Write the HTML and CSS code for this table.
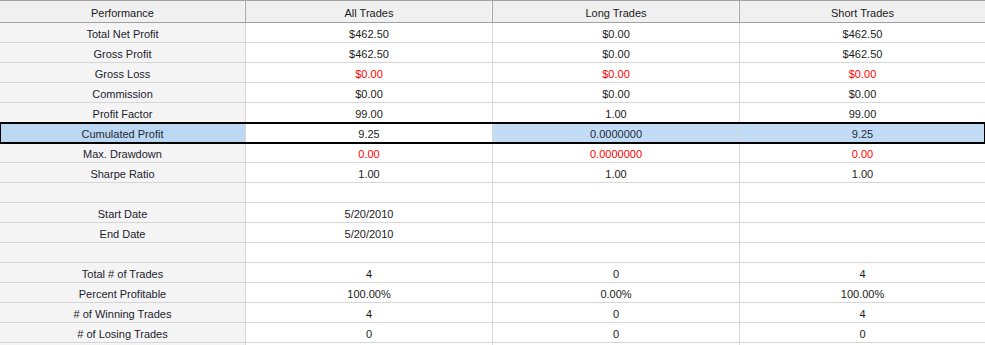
FILE: index.html
```html
<!DOCTYPE html>
<html>
<head>
<meta charset="utf-8">
<link rel="stylesheet" href="styles.css">
</head>
<body>
<div class="sheet">
  <div class="row head">
    <div class="cell">Performance</div>
    <div class="cell">All Trades</div>
    <div class="cell">Long Trades</div>
    <div class="cell">Short Trades</div>
  </div>
  <div class="row"><div class="cell label">Total Net Profit</div><div class="cell">$462.50</div><div class="cell">$0.00</div><div class="cell">$462.50</div></div>
  <div class="row"><div class="cell label">Gross Profit</div><div class="cell">$462.50</div><div class="cell">$0.00</div><div class="cell">$462.50</div></div>
  <div class="row"><div class="cell label">Gross Loss</div><div class="cell neg">$0.00</div><div class="cell neg">$0.00</div><div class="cell neg">$0.00</div></div>
  <div class="row"><div class="cell label">Commission</div><div class="cell">$0.00</div><div class="cell">$0.00</div><div class="cell">$0.00</div></div>
  <div class="row"><div class="cell label">Profit Factor</div><div class="cell">99.00</div><div class="cell">1.00</div><div class="cell">99.00</div></div>
  <div class="row selected"><div class="cell label sel">Cumulated Profit</div><div class="cell">9.25</div><div class="cell sel">0.0000000</div><div class="cell sel">9.25</div></div>
  <div class="row"><div class="cell label">Max. Drawdown</div><div class="cell neg">0.00</div><div class="cell neg">0.0000000</div><div class="cell neg">0.00</div></div>
  <div class="row"><div class="cell label">Sharpe Ratio</div><div class="cell">1.00</div><div class="cell">1.00</div><div class="cell">1.00</div></div>
  <div class="row"><div class="cell label"></div><div class="cell"></div><div class="cell"></div><div class="cell"></div></div>
  <div class="row"><div class="cell label">Start Date</div><div class="cell">5/20/2010</div><div class="cell"></div><div class="cell"></div></div>
  <div class="row"><div class="cell label">End Date</div><div class="cell">5/20/2010</div><div class="cell"></div><div class="cell"></div></div>
  <div class="row"><div class="cell label"></div><div class="cell"></div><div class="cell"></div><div class="cell"></div></div>
  <div class="row"><div class="cell label">Total # of Trades</div><div class="cell">4</div><div class="cell">0</div><div class="cell">4</div></div>
  <div class="row"><div class="cell label">Percent Profitable</div><div class="cell">100.00%</div><div class="cell">0.00%</div><div class="cell">100.00%</div></div>
  <div class="row"><div class="cell label"># of Winning Trades</div><div class="cell">4</div><div class="cell">0</div><div class="cell">4</div></div>
  <div class="row"><div class="cell label"># of Losing Trades</div><div class="cell">0</div><div class="cell">0</div><div class="cell">0</div></div>
  <div class="row"><div class="cell label"></div><div class="cell"></div><div class="cell"></div><div class="cell"></div></div>
</div>
</body>
</html>
```

FILE: styles.css
```css
html, body {
  margin: 0;
  padding: 0;
  background: #ffffff;
  overflow: hidden;
}
body {
  font-family: "Liberation Sans", Arial, sans-serif;
  font-size: 11px;
  color: #1b1b1b;
}
.sheet {
  width: 985px;
  height: 345px;
  overflow: hidden;
  display: flex;
  flex-direction: column;
}
.row {
  display: grid;
  grid-template-columns: 246px 247px 247px 1fr;
  height: 20px;
  flex: none;
  box-sizing: border-box;
  border-bottom: 1px solid #d6d6d6;
}
.cell {
  display: flex;
  align-items: center;
  justify-content: center;
  border-right: 1px solid #d6d6d6;
  white-space: nowrap;
  padding-top: 2px;
  box-sizing: border-box;
}
.cell:last-child {
  border-right: none;
}
.head {
  height: 23px;
  background: #f0f0f0;
  border-top: 1px solid #a0a0a0;
  border-bottom: 1px solid #a0a0a0;
}
.head .cell {
  border-right: 1px solid #a8a8a8;
  box-shadow: inset -1px 0 0 #f8f8f8;
  color: #1b1b1b;
  padding-top: 3px;
}
.head .cell:last-child {
  border-right: none;
  box-shadow: none;
}
.label {
  background: #f4f4f4;
  color: #1c1c2e;
}
.neg {
  color: #ff0000;
}
.selected {
  outline: 2px solid #000000;
  outline-offset: -1px;
  position: relative;
}
.sel {
  background: #c2dcf6;
  color: #1e2a3a;
}
.label.sel {
  background: #bcd7f2;
}
```
